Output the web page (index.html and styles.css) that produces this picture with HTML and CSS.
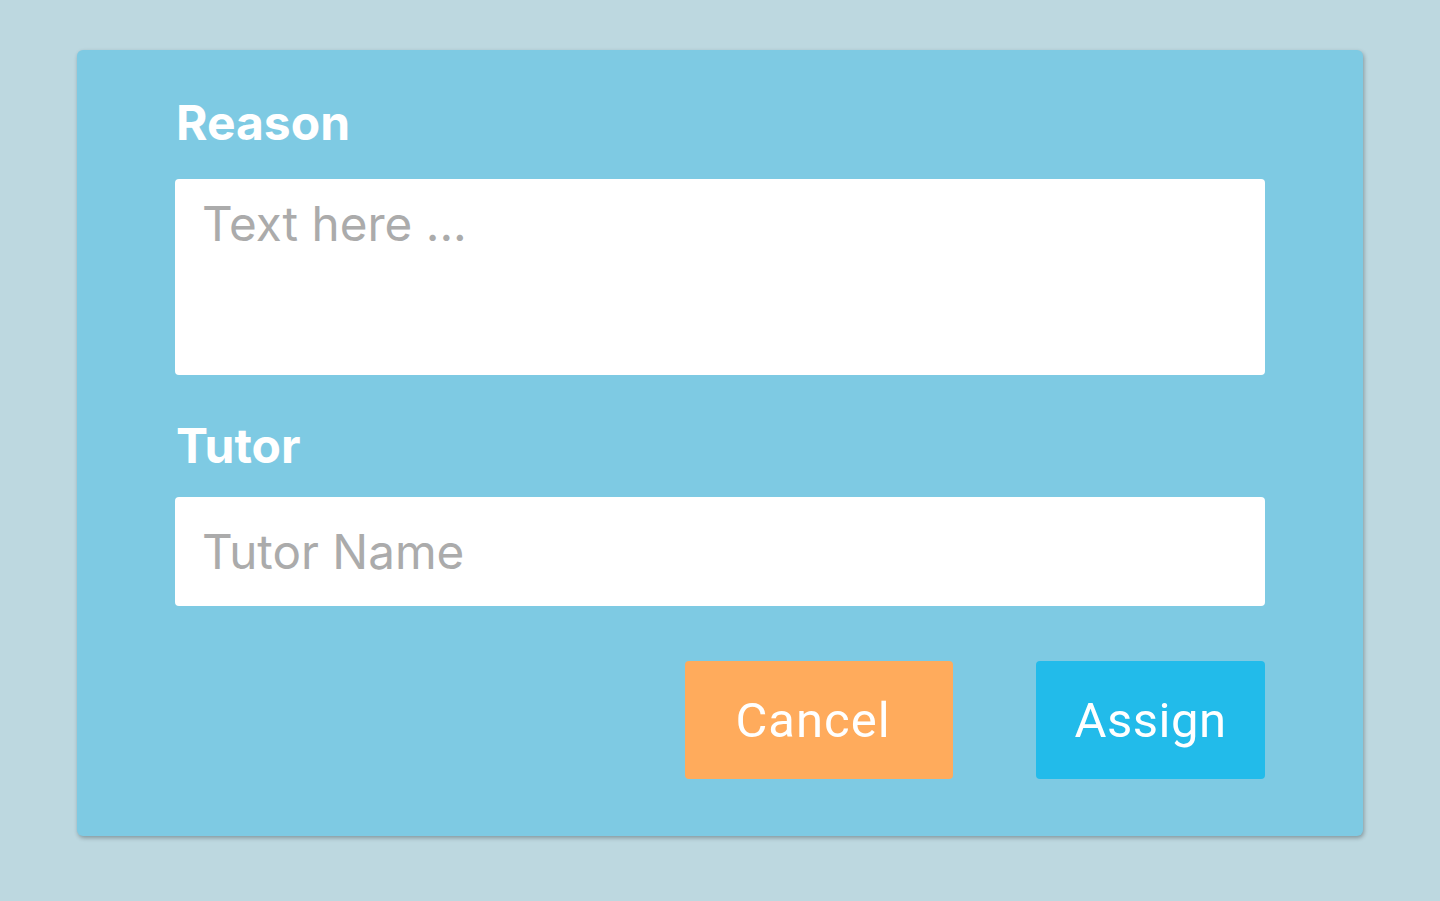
FILE: index.html
```html
<!DOCTYPE html>
<html>
<head>
<meta charset="utf-8">
<link rel="stylesheet" href="styles.css">
</head>
<body>
<div class="page">
  <form class="card">
    <label class="label label-reason">Reason</label>
    <div class="textarea"><span class="placeholder">Text here ...</span></div>
    <label class="label label-tutor">Tutor</label>
    <div class="input"><span class="placeholder">Tutor Name</span></div>
    <div class="actions">
      <button type="button" class="btn btn-cancel">Cancel</button>
      <button type="button" class="btn btn-assign">Assign</button>
    </div>
  </form>
</div>
</body>
</html>
```
FILE: styles.css
```css
html, body {
  margin: 0;
  padding: 0;
  background: #bdd8e0;
}
.page {
  padding: 50px 77px;
  height: 901px;
  box-sizing: border-box;
}
.card {
  width: 1286px;
  height: 786px;
  margin: 0;
  box-sizing: border-box;
  background: #7ecae3;
  border-radius: 6px;
  box-shadow: 1px 2px 4px rgba(0, 0, 0, 0.3);
  padding: 44px 98px 0 98px;
  display: flex;
  flex-direction: column;
  font-family: Inter, "Noto Sans", sans-serif;
}
.label {
  display: block;
  color: #ffffff;
  font-weight: 700;
  font-size: 48px;
  line-height: 58px;
  margin-left: 1px;
}
.label-reason {
  margin-bottom: 27px;
}
.label-tutor {
  margin-top: 42px;
  margin-bottom: 22px;
}
.textarea, .input {
  background: #ffffff;
  border-radius: 4px;
  box-sizing: border-box;
  padding-left: 27px;
}
.textarea {
  height: 196px;
  padding-top: 16px;
}
.input {
  height: 109px;
  display: flex;
  align-items: center;
}
.placeholder {
  color: #ababab;
  font-size: 47.6px;
  line-height: 58px;
  font-weight: 400;
}
.actions {
  display: flex;
  justify-content: flex-end;
  gap: 83px;
  margin-top: 55px;
}
.btn {
  border: none;
  border-radius: 4px;
  height: 118px;
  color: #ffffff;
  font-family: Roboto, "Liberation Sans", sans-serif;
  font-size: 49px;
  font-weight: 400;
  padding: 0;
  cursor: pointer;
}
.btn-cancel {
  width: 268px;
  background: #ffab5c;
  letter-spacing: 1px;
  padding-right: 12px;
}
.btn-assign {
  width: 229px;
  background: #22bbea;
  letter-spacing: 0.5px;
}
```
